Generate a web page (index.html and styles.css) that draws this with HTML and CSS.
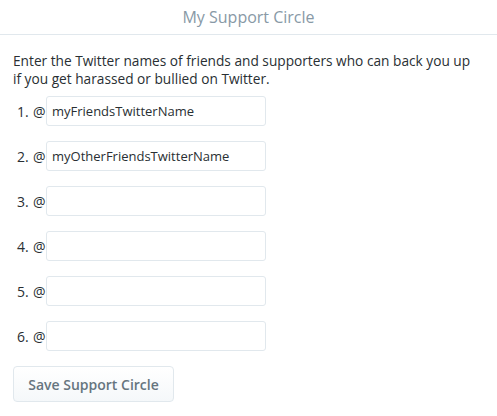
FILE: index.html
```html
<!DOCTYPE html>
<html>
<head>
<meta charset="utf-8">
<link rel="stylesheet" href="styles.css">
</head>
<body>
<header class="header">My Support Circle</header>
<main class="content">
  <p class="intro">Enter the Twitter names of friends and supporters who can back you up if you get harassed or bullied on Twitter.</p>
  <ol class="list">
    <li class="row"><span class="num">1.</span><span class="at">@</span><input class="field" type="text" value="myFriendsTwitterName"></li>
    <li class="row"><span class="num">2.</span><span class="at">@</span><input class="field" type="text" value="myOtherFriendsTwitterName"></li>
    <li class="row"><span class="num">3.</span><span class="at">@</span><input class="field" type="text"></li>
    <li class="row"><span class="num">4.</span><span class="at">@</span><input class="field" type="text"></li>
    <li class="row"><span class="num">5.</span><span class="at">@</span><input class="field" type="text"></li>
    <li class="row"><span class="num">6.</span><span class="at">@</span><input class="field" type="text"></li>
  </ol>
  <button class="save" type="button">Save Support Circle</button>
</main>
</body>
</html>
```
FILE: styles.css
```css
html, body {
  margin: 0;
  padding: 0;
  background: #fff;
  font-family: "Open Sans", "Liberation Sans", Arial, sans-serif;
  color: #292f33;
}
.header {
  height: 34px;
  border-bottom: 1px solid #e1e8ed;
  display: flex;
  align-items: center;
  justify-content: center;
  font-size: 16px;
  color: #8899a6;
}
.content {
  padding: 0 13px;
}
.intro {
  margin: 17px 6px 0 0;
  font-size: 13.7px;
  line-height: 18px;
}
.list {
  list-style: none;
  margin: 8px 0 0;
  padding: 0;
  display: flex;
  flex-direction: column;
  gap: 15px;
}
.row {
  display: flex;
  align-items: center;
  font-size: 14px;
  height: 30px;
}
.num {
  width: 20px;
  padding-left: 4px;
  box-sizing: border-box;
}
.at {
  width: 13px;
}
.field {
  box-sizing: border-box;
  width: 220px;
  height: 30px;
  border: 1px solid #e1e8ed;
  border-radius: 3px;
  padding: 0 5px;
  font-family: inherit;
  font-size: 13px;
  color: #292f33;
  outline: none;
}
.save {
  margin-top: 15px;
  width: 161px;
  height: 36px;
  border: 1px solid #e1e8ed;
  border-radius: 4px;
  background: linear-gradient(#fff, #f5f8fa);
  color: #66757f;
  font-family: inherit;
  font-weight: 600;
  font-size: 14px;
}
```
